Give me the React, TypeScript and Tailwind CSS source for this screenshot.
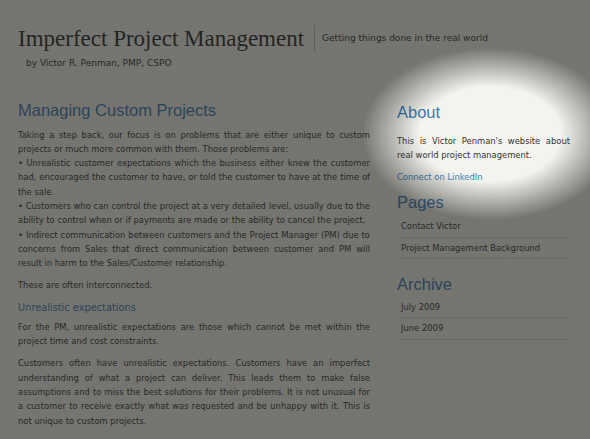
export default function App() {
  const body = "font-['DejaVu_Sans',Verdana,sans-serif] text-[8.4px] leading-[14.3px]";
  return (
    <div className="relative w-[590px] h-[439px] overflow-hidden bg-[#f4f4ef]">
      <div className="px-[18px] pt-[25px]">
        <div className="flex items-center">
          <h1 className="font-['Liberation_Serif',Georgia,serif] text-[23px] leading-[27px] text-[#2a2a2a] pr-[10px] border-r border-[#bbb]">
            Imperfect Project Management
          </h1>
          <p className="pl-[7px] pt-[1px] font-['DejaVu_Sans',Verdana,sans-serif] text-[9px] text-[#333]">
            Getting things done in the real world
          </p>
        </div>
        <p className="mt-[5px] ml-[8px] font-['DejaVu_Sans',Verdana,sans-serif] text-[9px] text-[#333]">
          by Victor R. Penman, PMP, CSPO
        </p>
      </div>

      <div className="flex px-[18px] pt-[29px] gap-[27px]">
        <div className="w-[352px]">
          <h2 className="font-['Liberation_Sans',Arial,sans-serif] text-[16.5px] leading-[20px] text-[#3a7ab5]">
            Managing Custom Projects
          </h2>
          <p className={`${body} text-[#333] text-justify mt-[8px]`}>
            Taking a step back, our focus is on problems that are either unique to custom projects or much more common with them. Those problems are:
            <br />• Unrealistic customer expectations which the business either knew the customer had, encouraged the customer to have, or told the customer to have at the time of the sale.
            <br />• Customers who can control the project at a very detailed level, usually due to the ability to control when or if payments are made or the ability to cancel the project.
            <br />• Indirect communication between customers and the Project Manager (PM) due to concerns from Sales that direct communication between customer and PM will result in harm to the Sales/Customer relationship.
          </p>
          <p className={`${body} text-[#333] mt-[8px]`}>These are often interconnected.</p>
          <h3 className="mt-[7px] font-['DejaVu_Sans',Verdana,sans-serif] text-[9.8px] leading-[16px] text-[#3a7ab5]">
            Unrealistic expectations
          </h3>
          <p className={`${body} text-[#333] text-justify mt-[4px]`}>
            For the PM, unrealistic expectations are those which cannot be met within the project time and cost constraints.
          </p>
          <p className={`${body} text-[#333] text-justify mt-[8px]`}>
            Customers often have unrealistic expectations. Customers have an imperfect understanding of what a project can deliver. This leads them to make false assumptions and to miss the best solutions for their problems. It is not unusual for a customer to receive exactly what was requested and be unhappy with it. This is not unique to custom projects.
          </p>
        </div>

        <div className="w-[173px]">
          <h2 className="font-['Liberation_Sans',Arial,sans-serif] text-[16.5px] leading-[20px] text-[#3a7ab5] mt-[2px]">
            About
          </h2>
          <p className={`${body} text-[#333] text-justify mt-[12px]`}>
            This is Victor Penman's website about real world project management.
          </p>
          <p className={`${body} mt-[8px] text-[#3a7ab5]`}>Connect on LinkedIn</p>

          <h2 className="font-['Liberation_Sans',Arial,sans-serif] text-[16.5px] leading-[20px] text-[#3a7ab5] mt-[8px]">
            Pages
          </h2>
          <ul className={`${body} text-[#333] mt-[4px]`}>
            <li className="pl-[4px] py-[3px] border-b border-[#d8d8d3]">Contact Victor</li>
            <li className="pl-[4px] py-[3px] border-b border-[#d8d8d3]">Project Management Background</li>
          </ul>

          <h2 className="font-['Liberation_Sans',Arial,sans-serif] text-[16.5px] leading-[20px] text-[#3a7ab5] mt-[15px]">
            Archive
          </h2>
          <ul className={`${body} text-[#333] mt-[3px]`}>
            <li className="pl-[4px] py-[3px] border-b border-[#d8d8d3]">July 2009</li>
            <li className="pl-[4px] py-[3px] border-b border-[#d8d8d3]">June 2009</li>
          </ul>
        </div>
      </div>

      <div className="pointer-events-none absolute inset-0 bg-[radial-gradient(ellipse_128px_86px_at_490px_134px,rgba(32,32,28,0)_0%,rgba(32,32,28,0)_55%,rgba(32,32,28,0.6)_100%)]" />
    </div>
  );
}
